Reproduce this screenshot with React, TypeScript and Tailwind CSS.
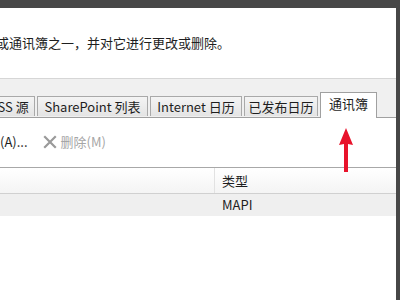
export default function App() {
  const tabs = [
    { label: "RSS 源", w: "w-[52px]" },
    { label: "SharePoint 列表", w: "w-[111px]" },
    { label: "Internet 日历", w: "w-[92px]" },
    { label: "已发布日历", w: "w-[74px]" },
  ];

  return (
    <div className="w-[400px] h-[300px] bg-[#474747] flex flex-col overflow-hidden font-['Noto_Sans_CJK_SC',sans-serif] text-[#1e1e1e]">
      {/* top dark edge */}
      <div className="h-[8px] shrink-0" />

      <div className="flex flex-1 min-h-0">
        <div className="relative w-[396px] bg-white flex flex-col">
          {/* description */}
          <div className="h-[70px] pt-[26px] text-[13px] leading-[18px] whitespace-nowrap -ml-[4px]">
            或通讯簿之一，并对它进行更改或删除。
          </div>

          {/* tab strip */}
          <div className="h-[40px] bg-[#f0f0f0] border-t border-[#d6d6d6] border-b border-b-[#a0a0a0] flex items-end gap-[2px] -ml-[17px] text-[13px]">
            {tabs.map((t) => (
              <div
                key={t.label}
                className={`${t.w} h-[20px] mb-[1px] shrink-0 border border-[#a9a9a9] border-b-0 bg-gradient-to-b from-[#f4f4f4] to-[#e4e4e4] flex items-center justify-center leading-none whitespace-nowrap`}
              >
                {t.label}
              </div>
            ))}
            <div className="w-[57px] h-[26px] -mb-px shrink-0 border border-[#a0a0a0] border-b-0 bg-white flex items-start justify-center pt-[3px] leading-[16px]">
              通讯簿
            </div>
          </div>

          {/* toolbar */}
          <div className="h-[49px] flex items-center text-[13px] whitespace-nowrap -ml-[13px] pb-[2px]">
            <span>改(A)...</span>
            <span className="ml-[15px] flex items-center text-[#a6a6a6]">
              <svg width="14" height="14" viewBox="0 0 14 14" className="mr-[4px]">
                <path d="M2 2 L12 12 M12 2 L2 12" stroke="#9a9a9a" strokeWidth="2.2" strokeLinecap="square" />
              </svg>
              删除(M)
            </span>
          </div>

          {/* list header */}
          <div className="h-[27px] border-t border-[#a8a8a8] border-b border-b-[#d0d0d0] bg-gradient-to-b from-white to-[#f4f4f4] flex text-[13px]">
            <div className="w-[215px] border-r border-[#e2e2e2]" />
            <div className="pl-[7px] flex items-center">类型</div>
          </div>

          {/* list row */}
          <div className="h-[22px] bg-[#efefef] flex text-[13px]">
            <div className="w-[222px]" />
            <div className="flex items-center">MAPI</div>
          </div>

          <div className="flex-1" />

          {/* red annotation arrow */}
          <svg
            className="absolute left-[338px] top-[119px]"
            width="16"
            height="46"
            viewBox="0 0 16 46"
          >
            <path d="M8 1 L15 18 L10 17 L10 45 L6 45 L6 17 L1 18 Z" fill="#e8132b" />
          </svg>
        </div>
        <div className="w-[4px] bg-[#474747]" />
      </div>
    </div>
  );
}
